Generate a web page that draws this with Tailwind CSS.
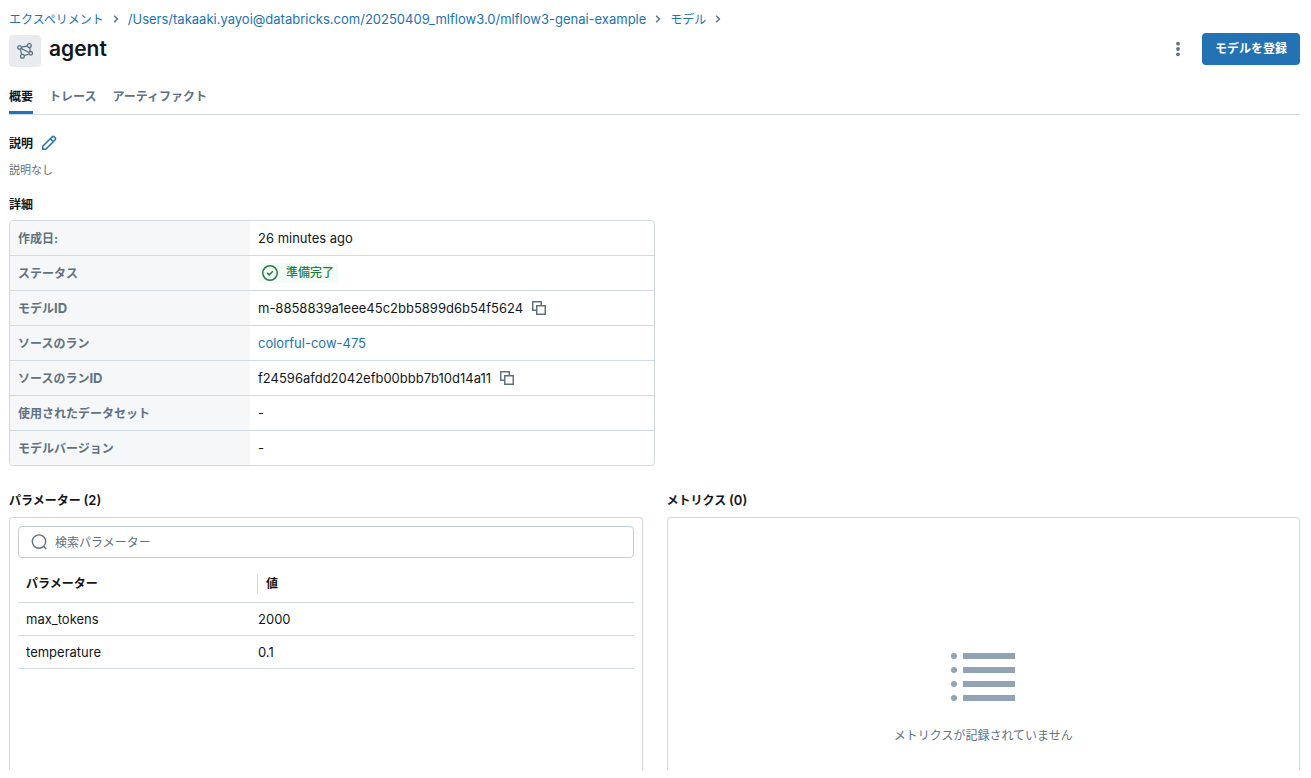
<!DOCTYPE html>
<html lang="ja">
<head>
<meta charset="utf-8">
<meta name="viewport" content="width=device-width, initial-scale=1">
<title>agent</title>
<script src="https://cdn.jsdelivr.net/npm/@tailwindcss/browser@4"></script>
</head>
<body class="bg-white font-['Inter','Noto_Sans_CJK_JP',sans-serif] text-[12px] leading-5 text-[#11171c]">
<svg class="hidden" aria-hidden="true">
  <symbol id="chevron" viewBox="0 0 16 16"><path d="M6.2 4.8L9.4 8l-3.2 3.2" fill="none" stroke="currentColor" stroke-width="1.5"/></symbol>
  <symbol id="copy" viewBox="0 0 16 16"><path d="M10.25 5.25v-3.5h-8.5v8.5h3.5M5.75 5.75h8.5v8.5h-8.5z" fill="none" stroke="currentColor" stroke-width="1.5"/></symbol>
</svg>
<div class="flex h-screen flex-col pb-2">
<main class="flex min-h-0 flex-1 flex-col overflow-hidden pt-[9px] pr-[11px] pl-[9px]">
  <header>
    <nav aria-label="パンくず" class="flex h-5 items-center text-[#2272b4]">
      <a href="#" class="pt-0.5">エクスペリメント</a>
      <svg class="mx-1 size-4 text-[#5f7281]"><use href="#chevron"/></svg>
      <a href="#" class="text-[13px]">/Users/takaaki.yayoi@databricks.com/20250409_mlflow3.0/mlflow3-genai-example</a>
      <svg class="mx-1 size-4 text-[#5f7281]"><use href="#chevron"/></svg>
      <a href="#" class="pt-0.5">モデル</a>
      <svg class="mx-1 size-4 text-[#5f7281]"><use href="#chevron"/></svg>
    </nav>
    <div class="mt-1 flex items-start justify-between">
      <div class="flex gap-2 pt-0.5">
        <span class="flex size-8 items-center justify-center rounded bg-[#e8ecf0] text-[#5f7281]">
          <svg class="size-4" viewBox="0 0 16 16" fill="none" stroke="currentColor" stroke-width="1.3">
            <circle cx="2.5" cy="4.4" r="1.8"/><circle cx="12.3" cy="2.6" r="1.9"/><circle cx="13.7" cy="10.3" r="1.8"/><circle cx="5.4" cy="13.3" r="1.9"/>
            <path d="M4.3 4.1l6.1-1.1M12.7 4.5l.6 4M7.2 12.7l4.8-1.7M3.1 6.1l1.7 5.4M4 5.4l8.2 4.1"/>
          </svg>
        </span>
        <h1 class="text-[21px] leading-7 font-semibold">agent</h1>
      </div>
      <div class="flex items-center gap-2">
        <button type="button" aria-label="その他" class="flex size-8 items-center justify-center text-[#5f7281]">
          <svg class="size-4" viewBox="0 0 16 16" fill="currentColor"><circle cx="8" cy="2.7" r="1.9"/><circle cx="8" cy="8" r="1.9"/><circle cx="8" cy="13.3" r="1.9"/></svg>
        </button>
        <button type="button" class="h-8 rounded bg-[#2272b4] px-[13px] font-semibold text-white">モデルを登録</button>
      </div>
    </div>
  </header>

  <div role="tablist" class="mt-4 flex gap-4 border-b border-[#d1d9e1] font-semibold text-[#5f7281]">
    <button type="button" role="tab" aria-selected="true" class="border-b-3 border-[#2272b4] pt-1 pb-1 font-bold text-[#11171c]">概要</button>
    <button type="button" role="tab" class="border-b-3 border-transparent pt-1 pb-1">トレース</button>
    <button type="button" role="tab" class="border-b-3 border-transparent pt-1 pb-1">アーティファクト</button>
  </div>

  <section class="mt-4">
    <div class="flex h-6 items-center gap-2">
      <h2 class="pt-0.5 font-bold">説明</h2>
      <button type="button" aria-label="説明を編集" class="text-[#2272b4]">
        <svg class="size-4" viewBox="0 0 16 16" fill="none" stroke="currentColor" stroke-width="1.5"><path d="M1.75 14.25v-3L11 2a1.7 1.7 0 0 1 2.4 0l.6.6a1.7 1.7 0 0 1 0 2.4l-9.25 9.25zM9.3 3.7l3 3"/></svg>
      </button>
    </div>
    <p class="mt-[5px] text-[11px] text-[#5f7281]">説明なし</p>
  </section>

  <section class="mt-[15px]">
    <h2 class="font-bold">詳細</h2>
    <div class="mt-[5px] w-1/2 overflow-hidden rounded border border-[#d1d9e1]">
      <table class="w-full table-fixed border-collapse text-left">
        <colgroup><col class="w-60"><col></colgroup>
        <tbody class="divide-y divide-[#d1d9e1]">
          <tr class="h-[34px]"><th scope="row" class="bg-[#f6f7f9] px-2 pt-0.5 font-bold text-[#5f7281]">作成日:</th><td class="px-2 text-[13px]">26 minutes ago</td></tr>
          <tr class="h-[35px]"><th scope="row" class="bg-[#f6f7f9] px-2 pt-0.5 font-bold text-[#5f7281]">ステータス</th><td class="px-2">
            <span class="flex w-fit items-center gap-2 rounded bg-[#f3fcf6] pr-1 pl-1 font-medium text-[#277c43]">
              <svg class="size-4" viewBox="0 0 16 16" fill="none" stroke="currentColor" stroke-width="1.5"><circle cx="8" cy="8" r="7.25"/><path d="M5.2 7.9l2 2 3.7-3.7"/></svg>準備完了</span></td></tr>
          <tr class="h-[35px]"><th scope="row" class="bg-[#f6f7f9] px-2 pt-0.5 font-bold text-[#5f7281]">モデル<span class="text-[13px]">ID</span></th><td class="px-2 text-[13px]"><span class="flex items-center gap-2">m-8858839a1eee45c2bb5899d6b54f5624<button type="button" aria-label="モデルIDをコピー" class="text-[#5f7281]"><svg class="size-4"><use href="#copy"/></svg></button></span></td></tr>
          <tr class="h-[35px]"><th scope="row" class="bg-[#f6f7f9] px-2 pt-0.5 font-bold text-[#5f7281]">ソースのラン</th><td class="px-2 text-[13px]"><a href="#" class="text-[#2272b4]">colorful-cow-475</a></td></tr>
          <tr class="h-[35px]"><th scope="row" class="bg-[#f6f7f9] px-2 pt-0.5 font-bold text-[#5f7281]">ソースのラン<span class="text-[13px]">ID</span></th><td class="px-2 text-[13px]"><span class="flex items-center gap-2">f24596afdd2042efb00bbb7b10d14a11<button type="button" aria-label="ソースのランIDをコピー" class="text-[#5f7281]"><svg class="size-4"><use href="#copy"/></svg></button></span></td></tr>
          <tr class="h-[35px]"><th scope="row" class="bg-[#f6f7f9] px-2 pt-0.5 font-bold text-[#5f7281]">使用されたデータセット</th><td class="px-2 text-[13px]">-</td></tr>
          <tr class="h-[35px]"><th scope="row" class="bg-[#f6f7f9] px-2 pt-0.5 font-bold text-[#5f7281]">モデルバージョン</th><td class="px-2 text-[13px]">-</td></tr>
        </tbody>
      </table>
    </div>
  </section>

  <div class="mt-6 grid min-h-0 flex-1 grid-cols-2 gap-6">
    <section class="flex min-h-0 flex-col">
      <h2 class="font-bold">パラメーター <span class="text-[13px] font-semibold">(2)</span></h2>
      <div class="mt-1.5 flex-1 rounded-t border border-b-0 border-[#d1d9e1] p-2">
        <label class="flex h-8 items-center gap-2 rounded border border-[#c0cdd8] px-3 text-[#5f7281]">
          <svg class="size-4" viewBox="0 0 16 16" fill="none" stroke="currentColor" stroke-width="1.4"><circle cx="8" cy="7.6" r="6.7"/><path d="M12.6 12.4l2.7 2.7"/></svg>
          <input type="text" aria-label="検索パラメーター" placeholder="検索パラメーター" class="min-w-0 flex-1 pt-0.5 outline-none placeholder:text-[#5f7281]">
        </label>
        <table class="mt-2 w-full table-fixed border-collapse text-left">
          <colgroup><col class="w-58"><col></colgroup>
          <thead><tr class="h-9 border-b border-[#d1d9e1]"><th scope="col" class="p-0 font-bold"><div class="mr-[-8px] ml-2 border-r border-[#d1d9e1] pr-2">パラメーター</div></th><th scope="col" class="pl-4 font-bold">値</th></tr></thead>
          <tbody class="text-[13px]">
            <tr class="h-[33px] border-b border-[#d1d9e1]"><td class="px-2">max_tokens</td><td class="px-2">2000</td></tr>
            <tr class="h-[33px] border-b border-[#d1d9e1]"><td class="px-2">temperature</td><td class="px-2">0.1</td></tr>
          </tbody>
        </table>
      </div>
    </section>
    <section class="flex min-h-0 flex-col">
      <h2 class="font-bold">メトリクス <span class="text-[13px] font-semibold">(0)</span></h2>
      <div class="mt-1.5 flex flex-1 flex-col items-center rounded-t border border-b-0 border-[#d1d9e1] pt-[127px]">
        <svg class="size-16 text-[#92a4b3]" viewBox="0 0 64 64" fill="currentColor"><circle cx="3" cy="11" r="3"/><circle cx="3" cy="25" r="3"/><circle cx="3" cy="39" r="3"/><circle cx="3" cy="53" r="3"/><path d="M12 8h52v6H12zM12 22h52v6H12zM12 36h52v6H12zM12 50h52v6H12z"/></svg>
        <p class="mt-[17px] text-[#5f7281]">メトリクスが記録されていません</p>
      </div>
    </section>
  </div>
</main>
</div>
</body>
</html>
